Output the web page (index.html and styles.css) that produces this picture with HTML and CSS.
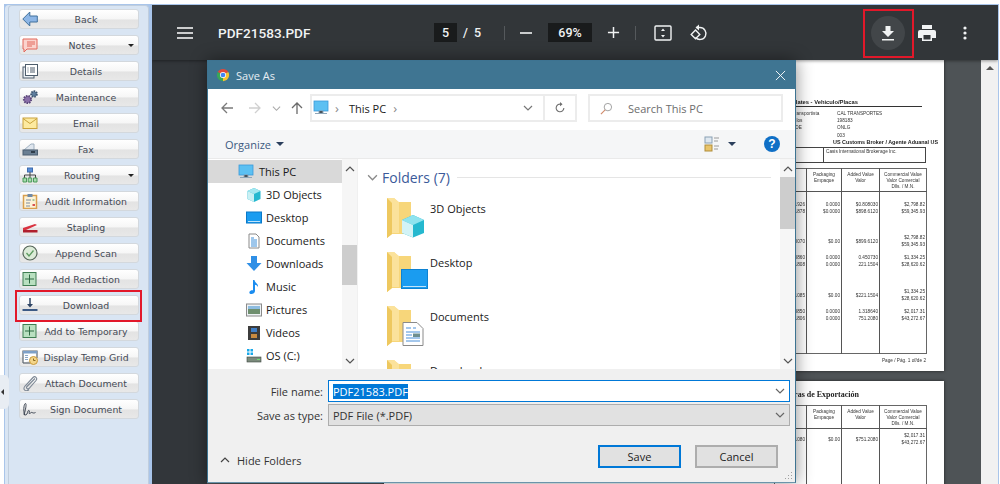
FILE: index.html
```html
<!DOCTYPE html>
<html lang="en">
<head>
<meta charset="UTF-8">
<meta name="viewport" content="width=device-width, initial-scale=1.0">
<link rel="stylesheet" href="styles.css">
<title>PDF21583.PDF</title>
</head>
<body>
<svg class="defs" width="0" height="0">
  <symbol id="folder" viewBox="0 0 40 42">
    <path d="M0 1h7l4 4h13v32H5l-5 4z" fill="#f7d67a"/>
    <path d="M0 1h7l5 4v31H5l-5 5z" fill="#fbe29b"/>
    <path d="M0 1v40l5-4V6z" fill="#eec85f"/>
  </symbol>
  <symbol id="plus" viewBox="0 0 16 16">
    <rect x="1" y="1.5" width="13" height="13" fill="#b9e0c0" stroke="#3f7d52"/>
    <path d="M7.5 3.5v9M3 8h9" stroke="#2f6a42" fill="none"/>
  </symbol>
  <symbol id="chev" viewBox="0 0 10 10">
    <path d="M1 3l4 4 4-4" fill="none" stroke="currentColor" stroke-width="1.2"/>
  </symbol>
</svg>

<div class="shell">
  <aside class="side">
    <div class="side-in">
      <a class="btn"><svg class="ico" viewBox="0 0 16 16"><path d="M.8 8l7-7v4h7.500v6H7.800v4z" fill="#8db6e6" stroke="#41719c"/></svg><span>Back</span></a>
      <a class="btn"><svg class="ico" viewBox="0 0 16 16"><path d="M1 2h14v10H5l-3 3v-3H1z" fill="#fbd3cd" stroke="#e2685c"/><path d="M5 5h8M5 7h8M5 9h5" stroke="#e2685c"/></svg><span>Notes</span><i class="caret"></i></a>
      <a class="btn"><svg class="ico" viewBox="0 0 16 16"><rect x="1" y="4" width="11" height="11" fill="#e8edf2" stroke="#4e5d6c"/><rect x="3.5" y="1.5" width="12" height="11" fill="#fff" stroke="#4e5d6c"/><path d="M5.5 5h1M5.5 7h1M5.5 9h1M8 5h5M8 7h5M8 9h5" stroke="#4e5d6c"/></svg><span>Details</span></a>
      <a class="btn"><svg class="ico" viewBox="0 0 16 16"><circle cx="5.5" cy="10.5" r="3.6" fill="#8a6fa8" stroke="#5a4578" stroke-width="2" stroke-dasharray="1.5 1"/><circle cx="12" cy="5" r="2.8" fill="#5f7f9f" stroke="#3e5670" stroke-width="2" stroke-dasharray="1.5 1"/></svg><span>Maintenance</span></a>
      <a class="btn"><svg class="ico" viewBox="0 0 16 16"><rect x="1" y="3" width="14" height="10.500" fill="#fdeaa0" stroke="#c9a23c"/><path d="M1 3.500l7 5 7-5" fill="none" stroke="#c9a23c"/></svg><span>Email</span></a>
      <a class="btn"><svg class="ico" viewBox="0 0 16 16"><path d="M2 9l7-6h3v6z" fill="#dfe6ee" stroke="#9fb0c0"/><rect x="1" y="9" width="14.500" height="5" fill="#6b7f92" stroke="#4d5f70"/><rect x="9" y="10" width="4" height="2" fill="#2f3d4a"/></svg><span>Fax</span></a>
      <a class="btn"><svg class="ico" viewBox="0 0 16 16"><rect x="5.500" y="1" width="5" height="4" fill="#5b8fd6" stroke="#3c6cb0"/><path d="M8 5v3M2.500 11V8h11v3M8 8v3" fill="none" stroke="#444"/><path d="M1 11h3.500v4H1zM6.200 11h3.500v4H6.200zM11.500 11H15v4h-3.500z" fill="#a8dcae" stroke="#4b9a5a"/></svg><span>Routing</span><i class="caret"></i></a>
      <a class="btn"><svg class="ico" viewBox="0 0 16 16"><rect x="1.500" y="2.500" width="13" height="13" fill="#fdf3d8" stroke="#d9a04e" stroke-width="1.500"/><rect x="5.500" y="1" width="5" height="3" fill="#6f8aa8"/><path d="M4 7h5M4 10h4M4 13h4" stroke="#7d8ba0"/><path d="M10.500 7h2" stroke="#4e9a5a"/><path d="M10.500 12h2.500" stroke="#d9534f" stroke-width="2"/></svg><span>Audit Information</span></a>
      <a class="btn"><svg class="ico" viewBox="0 0 16 16"><path d="M1 9l12-4 2 1-11 5H1z" fill="#d9323f"/><rect x="1" y="11" width="14.500" height="2.500" fill="#b01f2c"/></svg><span>Stapling</span></a>
      <a class="btn"><svg class="ico" viewBox="0 0 16 16"><circle cx="8" cy="8" r="7" fill="#dcebd8" stroke="#56665a" stroke-width="1.200"/><path d="M4.500 8l2.500 3 4.500-5.500" fill="none" stroke="#5d9b60" stroke-width="1.300"/></svg><span>Append Scan</span></a>
      <a class="btn"><svg class="ico"><use href="#plus"/></svg><span>Add Redaction</span></a>
      <a class="btn"><svg class="ico" viewBox="0 0 16 16"><path d="M8 1v7" stroke="#2e4463" stroke-width="1.500"/><path d="M5 7h6l-3 3.500z" fill="#2e4463"/><path d="M0.500 13h15" stroke="#3c5a85" stroke-width="2"/></svg><span>Download</span></a>
      <a class="btn"><svg class="ico"><use href="#plus"/></svg><span>Add to Temporary</span></a>
      <a class="btn"><svg class="ico" viewBox="0 0 16 16"><path d="M1 14V2h14v7" fill="#fff" stroke="#5c6670" stroke-width="1.200"/><path d="M1 14h7" stroke="#5c6670" stroke-width="1.200"/><path d="M1 2h14v2.500H1z" fill="#7da0c8"/><path d="M3 6.500h3M3 8.500h3M3 10.500h3" stroke="#8aa7c8"/><circle cx="11.500" cy="11.500" r="4" fill="#f3d58a" stroke="#c99a3a"/><path d="M11.500 9.500v2h2" fill="none" stroke="#8a6a20"/></svg><span>Display Temp Grid</span></a>
      <a class="btn"><svg class="ico" viewBox="0 0 16 16"><path d="M13 3.500L5 11.500c-1.500 1.500 .5 3 2 2l7-8c2-2.500-1-5-3-3l-8 8.500c-3 3.500 1 6.500 4 3.500" fill="none" stroke="#7c8794" stroke-width="1.100"/></svg><span>Attach Document</span></a>
      <a class="btn"><svg class="ico" viewBox="0 0 16 16"><path d="M2.500 14C1.500 10 1.500 4 3.300 2.500c1.500-.5 .5 6-1.300 11 1.500 1 3 .5 3.500-2 .2-1.500 1.500-3 1.800-1.500 .2 1.500-.8 2.500 .2 2.500 1 0 1.500-1.500 2.500-1 1 .5 2 .8 3.500 0" fill="none" stroke="#3b4350" stroke-width="1"/></svg><span>Sign Document</span></a>
    </div>
  </aside>

  <main class="viewer">
    <header class="bar">
      <svg class="burger" viewBox="0 0 16 12"><path d="M0 1h16M0 6h16M0 11h16" stroke="#fff" stroke-width="1.600"/></svg>
      <b class="doc-name">PDF21583.PDF</b>
      <div class="pager"><span class="num page-num">5</span><span class="slash">/</span><span>5</span></div>
      <i class="sep"></i>
      <svg class="tb-ico minus" viewBox="0 0 14 14"><path d="M1 7h12" stroke="#f1f3f4" stroke-width="1.600"/></svg>
      <span class="num zoom-num">69%</span>
      <svg class="tb-ico plus" viewBox="0 0 14 14"><path d="M1 7h12M7 1v12" stroke="#f1f3f4" stroke-width="1.600"/></svg>
      <i class="sep sep-b"></i>
      <svg class="fit" viewBox="0 0 18 16"><rect x="1" y="1" width="16" height="14" rx="1" fill="none" stroke="#f1f3f4" stroke-width="1.400"/><path d="M9 3.500l2 2.500H7zM9 12.500l2-2.500H7z" fill="#f1f3f4"/></svg>
      <svg class="rot" viewBox="0 0 18 18"><path d="M6.500 3.500h3.500a6 6 0 1 1-4.500 10" fill="none" stroke="#f1f3f4" stroke-width="1.400"/><path d="M9 .5v6L5.500 3.500z" fill="#f1f3f4"/><path d="M5.500 6l4.300 4.500-4.300 4.300-4.300-4.300z" fill="none" stroke="#f1f3f4" stroke-width="1.400"/></svg>
      <span class="dl-wrap"><span class="dl"><svg viewBox="0 0 14 16" width="14" height="16"><path d="M4.500 1h5v5H13L7 12 1 6h3.500zM1 14h12v1.600H1z" fill="#f1f3f4"/></svg></span></span>
      <svg class="print" viewBox="0 0 18 16"><path d="M4 0h10v4H4zM2 5h14a2 2 0 0 1 2 2v6h-4v3H4v-3H0V7a2 2 0 0 1 2-2z" fill="#f1f3f4"/><rect x="5.500" y="10" width="7" height="4.500" fill="#323639"/></svg>
      <svg class="dots" viewBox="0 0 4 14"><circle cx="2" cy="2" r="1.600" fill="#f1f3f4"/><circle cx="2" cy="7" r="1.600" fill="#f1f3f4"/><circle cx="2" cy="12" r="1.600" fill="#f1f3f4"/></svg>
    </header>

    <div class="view-body">
      <div class="rail"></div>
      <div class="pages">
        <section class="page page-one">
          <div class="doc">
            <h4 class="doc-head">Vehicle/Plates - Vehiculo/Placas</h4>
            <div class="doc-info">
              <span>Carrier / Transportista</span><span>CAL TRANSPORTES</span>
              <span>Seals / Sellos</span><span>198183</span>
              <span>SCAC CODE</span><span>ONLG</span>
              <span>Sites</span><span>003</span>
              <b class="hang">Agent.</b><b class="broker">US Customs Broker / Agente Aduanal US</b>
            </div>
            <div class="doc-box"><span></span><span>Casis International Brokerage Inc.</span></div>
            <table class="doc-table">
              <tr class="th"><td>Qty</td><td>Packaging<br>Empaque</td><td>Added Value<br>Valor</td><td>Commercial Value<br>Valor Comercial<br>Dlls. / M.N.</td></tr>
              <tr class="r1"><td>1926<br>1878</td><td>0.0000<br>$0.0000</td><td>$0.808030<br>$898.6120</td><td>$2,798.82<br>$59,345.93</td></tr>
              <tr class="r2"><td>0070</td><td>$0.00</td><td>$899.6120</td><td>$2,798.82<br>$59,345.93</td></tr>
              <tr class="r3"><td>0860<br>1808</td><td>0.0000<br>0.0000</td><td>0.450730<br>221.1504</td><td>$1,334.25<br>$28,620.62</td></tr>
              <tr class="r4"><td>1085</td><td>$0.00</td><td>$221.1504</td><td>$1,334.25<br>$28,620.62</td></tr>
              <tr class="r5"><td>0850<br>1806</td><td>0.0000<br>0.0000</td><td>1.318640<br>751.2080</td><td>$2,017.31<br>$43,272.67</td></tr>
            </table>
            <p class="doc-foot">Page / Pág. 1 of/de 2</p>
          </div>
        </section>
        <section class="page page-two">
          <div class="doc">
            <h4 class="doc-title">Facturas de Exportación</h4>
            <table class="doc-table">
              <tr class="th"><td>Qty</td><td>Packaging<br>Empaque</td><td>Added Value<br>Valor</td><td>Commercial Value<br>Valor Comercial<br>Dlls. / M.N.</td></tr>
              <tr class="r0"><td>1080</td><td>$0.00</td><td>$751.2080</td><td>$2,017.31<br>$43,272.67</td></tr>
            </table>
          </div>
        </section>
      </div>
      <div class="scroll"><i class="up"></i></div>
    </div>

    <div class="dialog">
      <div class="title">
        <svg class="chrome" viewBox="0 0 16 16"><path d="M8 8L1.940 4.500A7 7 0 0 1 14.060 4.500z" fill="#e0483a"/><path d="M8 8L14.060 4.500A7 7 0 0 1 8 15z" fill="#f6c331"/><path d="M8 8L8 15A7 7 0 0 1 1.940 4.500z" fill="#3aa757"/><circle cx="8" cy="8" r="3.500" fill="#fff"/><circle cx="8" cy="8" r="2.700" fill="#4285f4"/></svg>
        <span>Save As</span>
        <svg class="close" viewBox="0 0 12 12"><path d="M1 1l10 10M11 1L1 11" stroke="#fff" stroke-width="1"/></svg>
      </div>

      <div class="nav">
        <svg class="nav-ico" viewBox="0 0 14 14"><path d="M13 7H2M7 2L2 7l5 5" fill="none" stroke="#7a7a7a" stroke-width="1.300"/></svg>
        <svg class="nav-ico fwd" viewBox="0 0 14 14"><path d="M1 7h11M7 2l5 5-5 5" fill="none" stroke="#d0d0d0" stroke-width="1.300"/></svg>
        <svg class="nav-chev"><use href="#chev"/></svg>
        <svg class="nav-ico up-ico" viewBox="0 0 14 14"><path d="M7 13V2M2 7l5-5 5 5" fill="none" stroke="#6a6a6a" stroke-width="1.300"/></svg>
        <div class="addr">
          <svg class="t-ico" viewBox="0 0 16 16"><rect x="1" y="1" width="14" height="10" fill="#5cc0f2" stroke="#3a9ad9" stroke-width=".8"/><path d="M6 11h4v2H6zM2 13.500h12" stroke="#8fa6b8"/></svg>
          <span class="gt">›</span><span class="addr-txt">This PC</span><span class="gt">›</span>
          <svg class="addr-chev"><use href="#chev"/></svg>
          <span class="refresh"><svg viewBox="0 0 14 14" width="12" height="12"><path d="M11.500 7a4.500 4.500 0 1 1-3-4.300" fill="none" stroke="#6f6f6f" stroke-width="1.300"/><path d="M7 0v5l3-2.500z" fill="#6f6f6f"/></svg></span>
        </div>
        <div class="search">
          <svg viewBox="0 0 14 14" width="13" height="13"><circle cx="8.500" cy="5.500" r="4" fill="none" stroke="#9a9a9a"/><path d="M5.500 8.500L1 13" stroke="#d08a6a" stroke-width="1.200"/></svg>
          <span>Search This PC</span>
        </div>
      </div>

      <div class="tools">
        <span class="organize">Organize</span><i class="tool-caret"></i>
        <svg class="view-ico" viewBox="0 0 16 16"><rect x="1" y="1" width="7" height="6" fill="#dfe8f0" stroke="#8aa0b4"/><rect x="1" y="9" width="7" height="6" fill="#e9c46a" stroke="#b08d3a"/><path d="M10 2h5M10 5h4M10 10h5M10 13h4" stroke="#9a9a9a"/></svg>
        <i class="tool-caret view-caret"></i>
        <span class="help">?</span>
      </div>

      <div class="files">
        <ul class="tree">
          <li class="sel"><svg class="t-ico" viewBox="0 0 16 16"><rect x="1" y="1" width="14" height="10" fill="#5cc0f2" stroke="#3a9ad9" stroke-width=".8"/><path d="M6 11h4v2H6zM2 13.500h12" stroke="#8fa6b8"/></svg>This PC</li>
          <li><svg class="t-ico" viewBox="0 0 16 16"><path d="M8 1l6.500 3v8L8 15l-6.500-3V4z" fill="#25b8cf"/><path d="M8 1l6.500 3L8 7 1.500 4z" fill="#a5e8f0"/><path d="M1.500 4L8 7v8l-6.500-3z" fill="#c9f0f4"/></svg>3D Objects</li>
          <li><svg class="t-ico" viewBox="0 0 16 16"><rect x="0.500" y="2" width="15" height="11" fill="#1a9cf0" stroke="#0a78c8"/><path d="M2 11.500h12" stroke="#bfe4fb"/></svg>Desktop</li>
          <li><svg class="t-ico" viewBox="0 0 16 16"><path d="M3 1h7l3 3v11H3z" fill="#fff" stroke="#8a8a8a"/><path d="M5 5h3M5 7h6M5 9h6M5 11h6M5 13h6" stroke="#3f8fd8"/></svg>Documents</li>
          <li><svg class="t-ico" viewBox="0 0 16 16"><path d="M5 0h6v7h4.500L8 15 .5 7H5z" fill="#2f8fe6"/></svg>Downloads</li>
          <li><svg class="t-ico" viewBox="0 0 16 16"><path d="M7 1h1.500c.3 3 4 3.500 3.500 7-.8-1.500-2-2-3-2.200V12c0 2-2 3-3.500 3S3 14 3.500 12.800 5.500 11 7 11.300z" fill="#1a8cf0"/></svg>Music</li>
          <li><svg class="t-ico" viewBox="0 0 16 16"><rect x="0.500" y="2" width="15" height="12" fill="#eef2f5" stroke="#8a8a8a"/><path d="M2 4h12v3H2z" fill="#8dbce0"/><path d="M2 7h12v5H2z" fill="#6f8f6f"/></svg>Pictures</li>
          <li><svg class="t-ico" viewBox="0 0 16 16"><rect x="2" y="1" width="12" height="14" fill="#3c3c3c"/><rect x="5" y="3" width="6" height="4" fill="#3f7fc8"/><rect x="5" y="9" width="6" height="4" fill="#c88a3f"/></svg>Videos</li>
          <li><svg class="t-ico" viewBox="0 0 16 16"><path d="M1 1h2.500v2.500H1zM4.500 1H7v2.500H4.500zM1 4.500h2.500V7H1zM4.500 4.500H7V7H4.500z" fill="#18a8e8"/><rect x="1" y="9" width="14" height="5" fill="#7b8a7c" stroke="#3e4640" stroke-width=".6"/><path d="M11 11.500h3" stroke="#70e070"/></svg>OS (C:)</li>
        </ul>
        <div class="vbar vbar-tree"><svg class="arr"><use href="#chev" transform="rotate(180 5 5)"/></svg><i class="thumb thumb-tree"></i><svg class="arr arr-end"><use href="#chev"/></svg></div>
        <div class="list">
          <div class="group"><svg class="g-chev"><use href="#chev"/></svg><span>Folders (7)</span><i></i></div>
          <div class="item">
            <span class="big"><svg class="f-svg"><use href="#folder"/></svg><svg class="over" viewBox="0 0 24 24"><path d="M12 1l11 5v13l-11 4.500L1 19V6z" fill="#25b8cf"/><path d="M12 1l11 5-11 5L1 6z" fill="#8fe3ee"/><path d="M1 6l11 5v12.500L1 19z" fill="#d3f3f6"/></svg></span>
            <span class="item-name">3D Objects</span>
          </div>
          <div class="item">
            <span class="big"><svg class="f-svg"><use href="#folder"/></svg><svg class="over wide" viewBox="0 0 27 20"><rect x="0.500" y="0.500" width="26" height="19" fill="#1a9cf0" stroke="#0d82d2"/><path d="M2 17.500h23" stroke="#bfe4fb"/></svg></span>
            <span class="item-name">Desktop</span>
          </div>
          <div class="item">
            <span class="big"><svg class="f-svg"><use href="#folder"/></svg><svg class="over" viewBox="0 0 24 24"><path d="M2 .5h14l6 6V23.500H2z" fill="#fff" stroke="#8a8a8a"/><path d="M5 6h5M12 6h3M5 10h14M5 13h6M5 16h14M5 19h14" stroke="#4a90d9"/><rect x="12" y="11.500" width="7" height="3.500" fill="#6f8f8f"/></svg></span>
            <span class="item-name">Documents</span>
          </div>
          <div class="item">
            <span class="big"><svg class="f-svg"><use href="#folder"/></svg></span>
            <span class="item-name">Downloads</span>
          </div>
        </div>
        <div class="vbar vbar-list"><svg class="arr"><use href="#chev" transform="rotate(180 5 5)"/></svg><i class="thumb thumb-list"></i><svg class="arr arr-end"><use href="#chev"/></svg></div>
      </div>

      <div class="form">
        <div class="row">
          <label>File name:</label>
          <div class="field active"><mark>PDF21583.PDF</mark><svg class="f-chev"><use href="#chev"/></svg></div>
        </div>
        <div class="row">
          <label>Save as type:</label>
          <div class="field"><span>PDF File (*.PDF)</span><svg class="f-chev"><use href="#chev"/></svg></div>
        </div>
        <div class="foot">
          <svg class="hide-chev"><use href="#chev" transform="rotate(180 5 5)"/></svg>
          <span class="hide">Hide Folders</span>
          <button class="dlg-btn primary">Save</button>
          <button class="dlg-btn">Cancel</button>
        </div>
        <svg class="grip" viewBox="0 0 9 9"><path d="M7 1h1v1H7zM4 4h1v1H4zM7 4h1v1H7zM1 7h1v1H1zM4 7h1v1H4zM7 7h1v1H7z" fill="#a0a0a0"/></svg>
      </div>
    </div>
  </main>
</div>

<!-- red callouts drawn on the screenshot -->
<div class="mark mark-side"></div>
<div class="mark mark-top"></div>
<div class="handle"><i></i></div>
</body>
</html>
```

FILE: styles.css
```css
* { box-sizing: border-box; }
html, body { height: 100%; }
body { margin: 0; background: #fff; overflow: hidden; font-family: "Open Sans", sans-serif; position: relative; }
.defs { position: absolute; }
ul { list-style: none; margin: 0; padding: 0; }

.shell { display: flex; height: 484px; padding: 4px 1px 0 4px; }

/* left panel */
.side { width: 148px; flex: none; background: #a9c5ea; padding: 1px 3px 0 1px; }
.side-in { height: 100%; margin-left: 3px; background: #d9e5f3; border: 1px solid #c0cede; border-bottom: 0; border-radius: 4px 4px 0 0; padding: 3px 9px 0 10px; display: flex; flex-direction: column; gap: 6px; box-shadow: -3px 0 0 #d9e5f3; }
.btn { display: flex; align-items: center; height: 20px; flex: none; padding: 0 4px 0 2px; border: 1px solid #d3d8dd; border-radius: 3px; background: linear-gradient(#fff 0, #f6f6f6 50%, #e3e3e3 55%, #e8e8e8 100%); font: 9.400px "DejaVu Sans", sans-serif; color: #454a56; }
.btn span { flex: 1; text-align: center; white-space: nowrap; }
.ico { width: 16px; height: 16px; flex: none; }
.caret { width: 0; height: 0; border: 3px solid transparent; border-top: 3px solid #222; border-bottom: 0; flex: none; margin-left: 2px; }

/* viewer */
.viewer { flex: 1; position: relative; border-top: 1px solid #a9c5ea; border-right: 1px solid #a9c5ea; display: flex; flex-direction: column; overflow: hidden; }
.bar { height: 55px; flex: none; background: #323639; color: #f1f3f4; display: flex; align-items: center; position: relative; z-index: 1; box-shadow: 0 1px 3px rgba(0,0,0,.4); font: 13px Roboto, sans-serif; }
.burger { width: 16px; height: 12px; margin-left: 25px; }
.doc-name { margin-left: 25px; width: 216px; font-weight: 500; font-size: 13.600px; }
.pager { display: flex; align-items: center; gap: 6px; width: 70px; font-size: 12.500px; font-weight: 500; }
.num { background: #191b1c; height: 19px; display: flex; align-items: center; justify-content: center; font-size: 12.500px; font-weight: 500; }
.page-num { width: 23px; }
.zoom-num { width: 44px; margin-left: 15px; }
.sep { width: 1px; height: 14px; background: #55595c; }
.tb-ico { width: 14px; height: 14px; }
.minus { margin-left: 14px; }
.plus { margin-left: 15px; width: 13px; height: 13px; }
.sep-b { margin-left: 15px; }
.fit { width: 18px; height: 16px; margin-left: 18px; }
.rot { width: 18px; height: 18px; margin-left: 18px; }
.dl-wrap { margin-left: 163px; }
.dl { width: 34px; height: 34px; border-radius: 50%; background: #424649; display: flex; align-items: center; justify-content: center; }
.print { width: 18px; height: 16px; margin-left: 13px; }
.dots { width: 4px; height: 14px; margin-left: 27px; }

.view-body { flex: 1; display: flex; min-height: 0; }
.rail { width: 55px; background: #32363a; flex: none; }
.pages { flex: 1; background: #4e5356; overflow: hidden; padding-right: 37px; display: flex; flex-direction: column; align-items: flex-end; gap: 10px; }
.page { width: 560px; flex: none; background: #fff; box-shadow: 0 0 3px rgba(0,0,0,.6); padding-right: 18px; font: 4.700px "Liberation Sans", sans-serif; color: #333; overflow: hidden; }
.page-one { height: 311px; }
.page-two { height: 120px; }
.doc { width: 152px; margin-left: auto; filter: blur(.4px); }
.doc-head { margin: 0 4px 0 0; padding: 38px 64px 0 0; height: 47px; font-size: 5.800px; line-height: 8px; white-space: nowrap; display: flex; justify-content: flex-end; border-bottom: 1px solid #333; color: #222; }
.doc-info { display: grid; grid-template-columns: 63px auto; padding-top: 3px; line-height: 7.200px; white-space: nowrap; }
.doc-info b { color: #222; }
.hang { padding-left: 7px; }
.broker { font-size: 5.400px; margin-left: -4px; }
.doc-box { display: grid; grid-template-columns: 48px 104px; height: 16px; margin-top: 1px; border: 1px solid #444; }
.doc-box span + span { border-left: 1px solid #444; padding: 1px 2px; }
.doc-table { width: 152px; border-collapse: collapse; table-layout: fixed; margin-top: 5px; border: 1.500px solid #666; text-align: right; line-height: 7px; }
.doc-table td { border-left: 1px solid #555; padding: 0 1px 0 0; vertical-align: top; white-space: nowrap; width: 35px; }
.doc-table td:first-child { width: 32px; border-left: 0; }
.doc-table td:nth-child(3) { width: 38px; }
.doc-table td:nth-child(4) { width: 47px; }
.th td { height: 23px; text-align: center; padding: 3px 0 0; line-height: 6px; border-bottom: 1px solid #555; }
.r1 td { padding-top: 9px; }
.r2 td { padding-top: 19px; vertical-align: middle; }
.r3 td { padding-top: 6px; }
.r4 td { padding-top: 20px; vertical-align: middle; }
.r5 td { padding-top: 6px; padding-bottom: 31px; }
.r0 td { padding-top: 3px; padding-bottom: 60px; vertical-align: middle; }
.doc-foot { margin: 3px 0 0; text-align: right; line-height: 8px; }
.doc-title { margin: 0; padding: 9px 67px 0 0; height: 19px; text-align: right; font: bold 8px "Liberation Serif", serif; color: #222; }
.scroll { width: 17px; flex: none; background: #f1f1f1; }
.up { display: block; width: 0; height: 0; margin: 6px auto 0; border: 4px solid transparent; border-bottom: 4px solid #555; border-top: 0; }

/* save as window */
.dialog { position: absolute; left: 55px; top: 55px; width: 589px; height: 423px; background: #fff; border: 1px solid #3d7391; border-bottom-color: #6a94ab; display: flex; flex-direction: column; z-index: 2; box-shadow: 0 0 16px rgba(0,0,0,.45); font: 11px "Open Sans", sans-serif; color: #1a1a1a; }
.title { height: 28px; flex: none; background: #3f7592; color: #e6eef3; display: flex; align-items: center; padding: 0 9px 0 8px; }
.chrome { width: 14px; height: 14px; margin-right: 6px; }
.close { width: 11px; height: 11px; margin-left: auto; }
.nav { height: 41px; flex: none; display: flex; align-items: center; padding: 0 0 3px 12px; }
.nav-ico { width: 14px; height: 14px; flex: none; }
.fwd { margin-left: 14px; }
.nav-chev { width: 9px; height: 9px; margin-left: 10px; color: #a8a8a8; flex: none; }
.up-ico { margin-left: 9px; }
.addr { width: 267px; height: 28px; margin-left: 6px; border: 2px solid #ececec; display: flex; align-items: center; padding-left: 1px; }
.t-ico { width: 16px; height: 16px; flex: none; }
.gt { color: #8a8a8a; font-size: 13px; margin: 0 7px 0 6px; line-height: 1; }
.addr-txt { margin-left: 3px; }
.addr-txt + .gt { margin-left: 7px; }
.addr-chev { width: 10px; height: 10px; margin-left: auto; margin-right: 10px; color: #777; }
.refresh { width: 32px; height: 24px; border-left: 2px solid #ececec; display: flex; align-items: center; justify-content: center; }
.search { width: 195px; height: 28px; margin-left: 11px; border: 2px solid #ececec; display: flex; align-items: center; gap: 15px; padding-left: 10px; color: #6d6d6d; }
.tools { height: 29px; flex: none; background: #f5f6f7; display: flex; align-items: center; padding-left: 17px; border-bottom: 1px solid #eaeaea; }
.organize { color: #3c5a7f; }
.tool-caret { width: 0; height: 0; border: 4px solid transparent; border-top: 4px solid #2b3f5c; border-bottom: 0; margin-left: 5px; }
.view-ico { width: 16px; height: 16px; margin-left: 420px; }
.view-caret { margin-left: 8px; }
.help { width: 16px; height: 16px; margin-left: 28px; border-radius: 50%; background: #0f6fc6; color: #fff; font: bold 12px/16px "Liberation Sans", sans-serif; text-align: center; }

.files { height: 210px; flex: none; display: flex; overflow: hidden; }
.tree { width: 134px; flex: none; padding-top: 1px; }
.tree li { height: 23px; display: flex; align-items: center; gap: 4px; padding-left: 38px; white-space: nowrap; }
.tree li.sel { background: #d9d9d9; padding-left: 30px; gap: 5px; }
.vbar { width: 15px; flex: none; background: #f6f6f6; position: relative; color: #555; }
.arr { position: absolute; left: 3px; top: 5px; width: 10px; height: 10px; }
.arr-end { top: auto; bottom: 3px; }
.thumb { position: absolute; left: 0; width: 15px; background: #cdcdcd; }
.thumb-tree { top: 86px; height: 40px; }
.thumb-list { top: 18px; height: 52px; }
.list { flex: 1; border-left: 1px solid #f0f0f0; padding: 9px 0 0 9px; min-width: 0; }
.group { display: flex; align-items: center; height: 18px; color: #3b5a9a; font-size: 14px; }
.g-chev { width: 11px; height: 11px; color: #8a8a8a; margin-right: 4px; flex: none; }
.group i { flex: 1; height: 1px; background: #e5e5e5; margin: 0 9px 0 7px; }
.item { display: flex; height: 54px; margin-left: 20px; gap: 6px; padding-top: 4px; }
.group + .item { margin-top: 7px; }
.item-name { padding-top: 4px; }
.big { width: 37px; height: 42px; position: relative; flex: none; }
.f-svg { width: 40px; height: 42px; }
.over { position: absolute; right: -1px; bottom: 1px; width: 24px; height: 24px; }
.over.wide { right: -4px; bottom: 4px; width: 27px; height: 20px; }

.form { flex: 1; background: #f0f0f0; padding: 11px 5px 0 0; position: relative; }
.row { display: flex; align-items: center; height: 22px; margin-bottom: 2px; color: #333; }
.row label { width: 115px; text-align: right; margin-right: 5px; }
.field { flex: 1; height: 22px; background: #e1e1e1; border: 1px solid #adadad; display: flex; align-items: center; justify-content: space-between; padding: 0 4px; }
.field.active { background: #fff; border: 1px solid #0078d7; }
.field mark { background: #0078d7; color: #fff; }
.f-chev { width: 10px; height: 10px; color: #666; }
.foot { display: flex; align-items: center; margin-top: 19px; padding-left: 12px; height: 23px; }
.hide-chev { width: 10px; height: 10px; color: #444; margin-top: 7px; }
.hide { margin: 7px 0 0 7px; color: #333; }
.dlg-btn { width: 83px; height: 23px; background: #e1e1e1; border: 2px solid #adadad; color: #222; font: inherit; padding: 0; margin-right: 12px; }
.primary { margin-left: auto; border-color: #0078d7; margin-right: 14px; }
.grip { position: absolute; right: 2px; bottom: 2px; width: 9px; height: 9px; }

/* red boxes marked on the screenshot, and the splitter tab */
.mark { position: absolute; border: 2px solid #e2182a; z-index: 3; }
.mark-side { left: 15px; top: 290px; width: 127px; height: 32px; }
.mark-top { left: 863px; top: 9px; width: 51px; height: 49px; }
.handle { position: absolute; left: 0; top: 375px; width: 9px; height: 34px; background: #e8edf3; border-radius: 0 5px 5px 0; display: flex; align-items: center; }
.handle i { width: 0; height: 0; border: 3px solid transparent; border-right: 3px solid #333; border-left: 0; margin-left: 1px; }
```
